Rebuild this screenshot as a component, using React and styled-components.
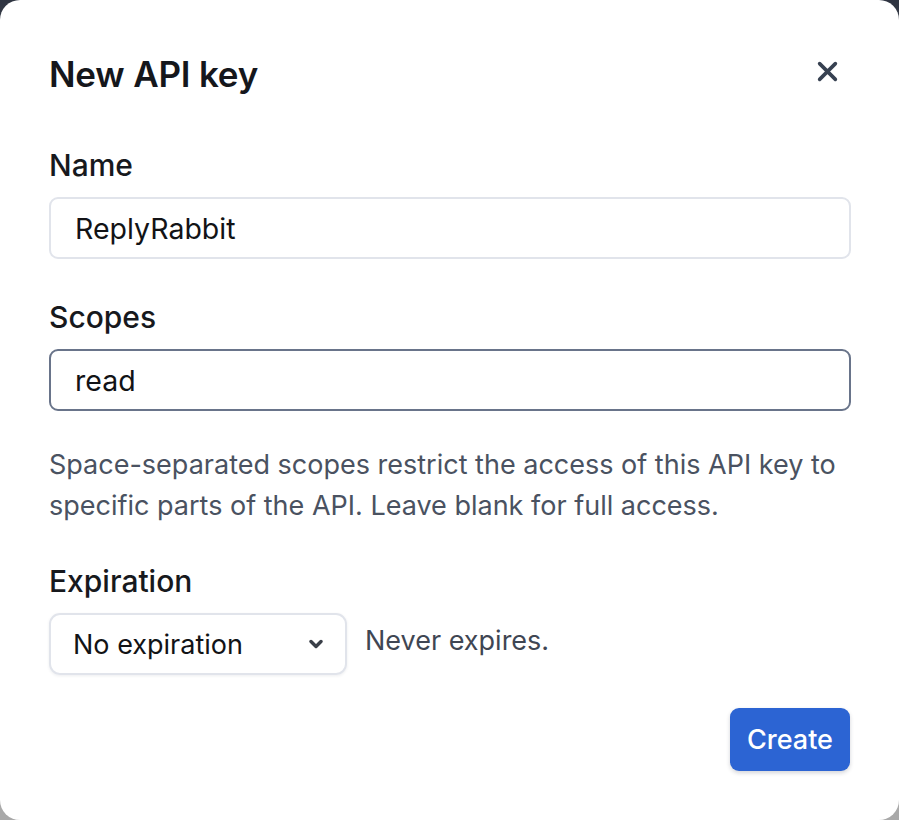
import React from "react";
import styled, { createGlobalStyle } from "styled-components";

const Global = createGlobalStyle`
  html, body { margin: 0; padding: 0; }
  body {
    background: linear-gradient(to bottom, #2e3441 0px, #3a3f49 30px, #a9a9a9 60px, #a9a9a9 100%);
    font-family: Inter, "Noto Sans", "Liberation Sans", sans-serif;
    -webkit-font-smoothing: antialiased;
  }
`;

const Dialog = styled.div`
  box-sizing: border-box;
  width: 899px;
  min-height: 820px;
  background: #ffffff;
  border-radius: 20px;
  padding: 54px 48px 48px 49px;
  display: flex;
  flex-direction: column;
`;

const Header = styled.div`
  display: flex;
  align-items: center;
  justify-content: space-between;
`;

const Title = styled.h2`
  margin: 0;
  font-size: 35px;
  line-height: 40px;
  font-weight: 600;
  color: #15171c;
  letter-spacing: -0.2px;
`;

const CloseButton = styled.button`
  border: none;
  background: none;
  padding: 0;
  margin: 0 13px 6px 0;
  width: 21px;
  height: 21px;
  display: flex;
  align-items: center;
  justify-content: center;
  color: #374151;
  cursor: pointer;
`;

const Field = styled.div`
  display: flex;
  flex-direction: column;
  margin-top: ${(p) => p.$top}px;
`;

const Label = styled.label`
  font-size: 30px;
  line-height: 36px;
  font-weight: 500;
  color: #17191d;
  margin-bottom: 14px;
`;

const Input = styled.div`
  box-sizing: border-box;
  height: 62px;
  border: 2px solid ${(p) => (p.$focused ? "#69748a" : "#e1e4eb")};
  border-radius: 9px;
  padding: 0 24px;
  display: flex;
  align-items: center;
  font-size: 28.5px;
  color: #121316;
`;

const Help = styled.p`
  margin: 33px 0 0;
  font-size: 27px;
  line-height: 41px;
  color: #4a5261;
`;

const Row = styled.div`
  display: flex;
  align-items: center;
  gap: 18px;
`;

const Select = styled.div`
  box-sizing: border-box;
  width: 298px;
  height: 62px;
  border: 2px solid #e1e4eb;
  border-radius: 11px;
  box-shadow: 0 1px 3px rgba(30, 41, 59, 0.08);
  padding: 0 22px 0 22px;
  display: flex;
  align-items: center;
  justify-content: space-between;
  font-size: 27px;
  color: #121316;
`;

const Hint = styled.span`
  font-size: 27px;
  color: #3f4653;
  margin-bottom: 8px;
`;

const Footer = styled.div`
  display: flex;
  justify-content: flex-end;
  margin-top: 33px;
  padding-right: 1px;
`;

const PrimaryButton = styled.button`
  box-sizing: border-box;
  width: 120px;
  height: 63px;
  border: none;
  border-radius: 9px;
  background: #2c64d3;
  color: #ffffff;
  font-family: inherit;
  font-size: 27px;
  font-weight: 500;
  box-shadow: 0 2px 4px rgba(15, 23, 42, 0.18);
  cursor: pointer;
`;

const XIcon = () => (
  <svg width="21" height="21" viewBox="0 0 20 20" fill="none">
    <path d="M2.5 2.5 L17.5 17.5 M17.5 2.5 L2.5 17.5" stroke="currentColor" strokeWidth="3.4" strokeLinecap="round" />
  </svg>
);

const Chevron = () => (
  <svg width="14" height="10" viewBox="0 0 14 10" fill="none">
    <path d="M2 2.5 L7 7.5 L12 2.5" stroke="#3a3f48" strokeWidth="3.4" strokeLinecap="round" strokeLinejoin="round" />
  </svg>
);

export default function App() {
  return (
    <>
      <Global />
      <Dialog>
        <Header>
          <Title>New API key</Title>
          <CloseButton aria-label="Close">
            <XIcon />
          </CloseButton>
        </Header>
        <Field $top={53}>
          <Label>Name</Label>
          <Input>ReplyRabbit</Input>
        </Field>
        <Field $top={40}>
          <Label>Scopes</Label>
          <Input $focused>read</Input>
        </Field>
        <Help>
          Space-separated scopes restrict the access of this API key to specific parts of the API. Leave blank for full access.
        </Help>
        <Field $top={37}>
          <Label>Expiration</Label>
          <Row>
            <Select>
              <span>No expiration</span>
              <Chevron />
            </Select>
            <Hint>Never expires.</Hint>
          </Row>
        </Field>
        <Footer>
          <PrimaryButton>Create</PrimaryButton>
        </Footer>
      </Dialog>
    </>
  );
}
